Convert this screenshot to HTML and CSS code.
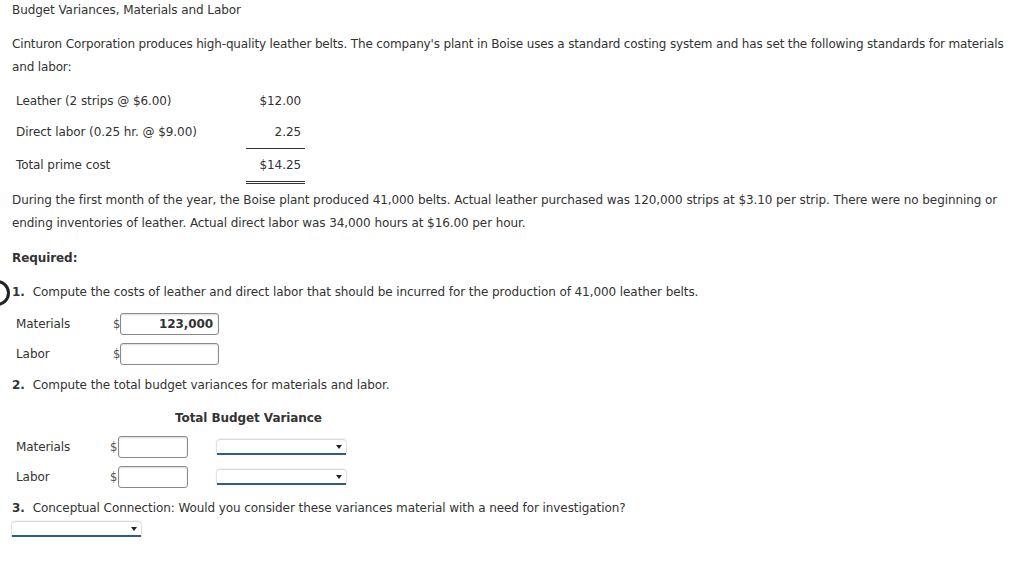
FILE: index.html
```html
<!DOCTYPE html>
<html>
<head>
<meta charset="utf-8">
<link rel="stylesheet" href="styles.css">
</head>
<body>
<div class="page">
  <p class="title">Budget Variances, Materials and Labor</p>
  <p class="para intro">Cinturon Corporation produces high-quality leather belts. The company's plant in Boise uses a standard costing system and has set the following standards for materials and labor:</p>
  <table class="std">
    <tr><td class="lbl">Leather (2 strips @ $6.00)</td><td class="amt">$12.00</td></tr>
    <tr><td class="lbl">Direct labor (0.25 hr. @ $9.00)</td><td class="amt single">2.25</td></tr>
    <tr><td class="lbl">Total prime cost</td><td class="amt double">$14.25</td></tr>
  </table>
  <p class="para during">During the first month of the year, the Boise plant produced 41,000 belts. Actual leather purchased was 120,000 strips at $3.10 per strip. There were no beginning or ending inventories of leather. Actual direct labor was 34,000 hours at $16.00 per hour.</p>
  <p class="req">Required:</p>
  <div class="q q1"><span class="marker"></span><b class="num">1.</b>Compute the costs of leather and direct labor that should be incurred for the production of 41,000 leather belts.</div>
  <div class="row r1 first">
    <span class="rlbl">Materials</span><span class="dol">$</span><span class="inp wide filled">123,000</span>
  </div>
  <div class="row r1">
    <span class="rlbl">Labor</span><span class="dol">$</span><span class="inp wide"></span>
  </div>
  <div class="q q2"><b class="num">2.</b>Compute the total budget variances for materials and labor.</div>
  <div class="tbvh">Total Budget Variance</div>
  <div class="row r2 first">
    <span class="rlbl2">Materials</span><span class="dol">$</span><span class="inp narrow"></span><span class="sel"></span>
  </div>
  <div class="row r2">
    <span class="rlbl2">Labor</span><span class="dol">$</span><span class="inp narrow"></span><span class="sel"></span>
  </div>
  <div class="q q3"><b class="num">3.</b>Conceptual Connection: Would you consider these variances material with a need for investigation?</div>
  <div class="selrow"><span class="sel"></span></div>
</div>
</body>
</html>
```
FILE: styles.css
```css
html, body {
  margin: 0;
  padding: 0;
  background: #fff;
}
body {
  font-family: "DejaVu Sans", Verdana, sans-serif;
  font-size: 12px;
  letter-spacing: -0.08px;
  color: #333;
}
.page {
  padding: 1px 0 0 12px;
  position: relative;
}
p { margin: 0; }
.title {
  line-height: 18px;
}
.para {
  line-height: 23px;
}
.intro {
  margin-top: 13.5px;
  letter-spacing: -0.15px;
}
.std {
  border-collapse: collapse;
  margin-top: 7px;
}
.std td {
  padding: 0 4px;
  height: 31px;
}
.std tr:last-child td { height: 32px; }
.lbl { width: 226px; }
.amt {
  width: 51px;
  text-align: right;
}
.single { border-bottom: 1px solid #333; }
.double { border-bottom: 3px double #333; }
.during { margin-top: 5px; }
.req {
  font-weight: bold;
  line-height: 23px;
  margin-top: 12px;
}
.q {
  line-height: 23px;
  position: relative;
}
.q1 { margin-top: 11px; }
.q2 { margin-top: 5.5px; }
.q3 { margin-top: 4.5px; }
.num {
  margin-right: 8px;
}
.marker {
  position: absolute;
  left: -28px;
  top: -1px;
  width: 26px;
  height: 26px;
  border: 3px solid #222;
  border-radius: 50%;
  box-sizing: border-box;
}
.row {
  display: flex;
  align-items: center;
  height: 30px;
}
.r1.first { margin-top: 5px; }
.r2.first { margin-top: 2px; }
.r1 .rlbl {
  width: 97px;
  padding-left: 4px;
}
.rlbl2 {
  width: 94px;
  padding-left: 4px;
}
.dol {
  width: 7px;
  font-size: 11.5px;
  color: #555;
}
.inp {
  display: inline-block;
  height: 22px;
  box-sizing: border-box;
  border: 1px solid #8a8a8a;
  border-radius: 3px;
  box-shadow: inset 0 1px 2px rgba(0,0,0,0.15);
  background: #fff;
  line-height: 20px;
  text-align: right;
  padding-right: 5px;
  font-weight: bold;
  color: #333;
}
.wide { width: 99px; }
.narrow { width: 70px; margin-left: 1px; }
.sel {
  display: inline-block;
  width: 129px;
  height: 15px;
  box-sizing: border-box;
  background: #fff;
  border-bottom: 2px solid #2f5b8a;
  border-radius: 3px 3px 0 0;
  box-shadow: 0 -1px 2px rgba(0,0,0,0.18), 1px 0 1px rgba(0,0,0,0.08), -1px 0 1px rgba(0,0,0,0.08);
  position: relative;
}
.sel::after {
  content: "";
  position: absolute;
  right: 4px;
  top: 5px;
  border-left: 3.5px solid transparent;
  border-right: 3.5px solid transparent;
  border-top: 4px solid #222;
}
.r2 .sel { margin-left: 29px; }
.tbvh {
  font-weight: bold;
  line-height: 23px;
  margin-top: 10px;
  padding-left: 163px;
}
.selrow {
  margin-top: 2.5px;
  height: 15px;
  display: flex;
}
```
